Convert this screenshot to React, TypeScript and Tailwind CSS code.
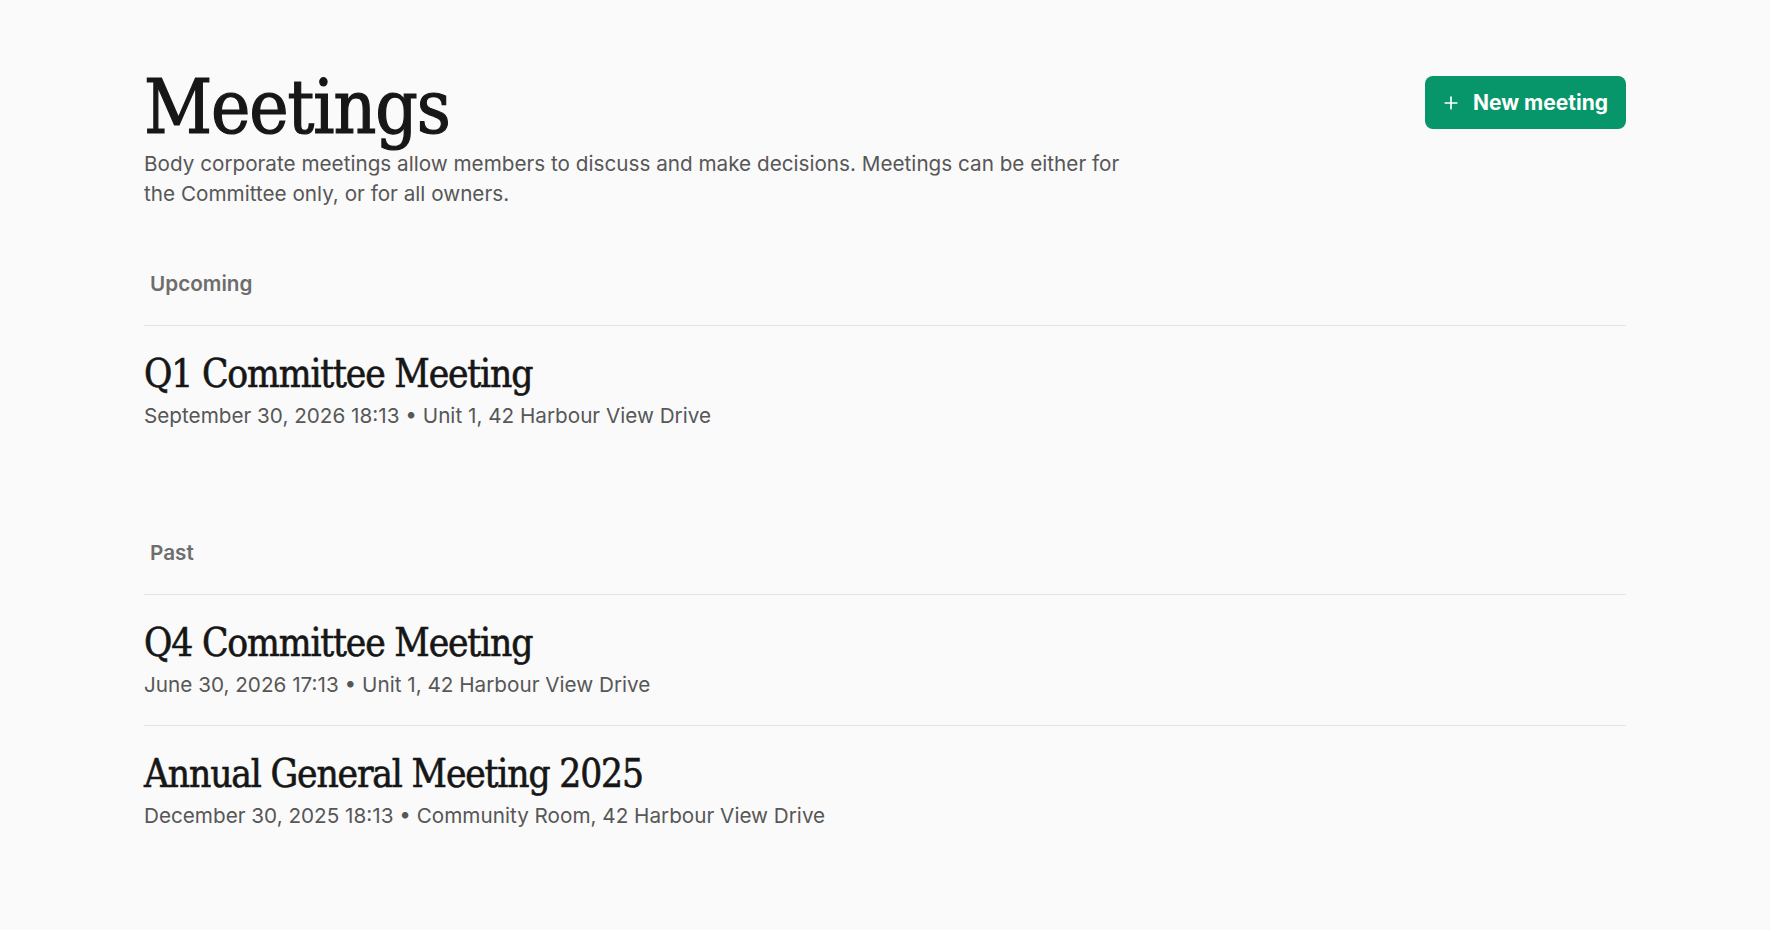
import React from 'react';
import { Plus } from 'lucide-react';

type Meeting = { title: string; when: string; where: string };

const upcoming: Meeting[] = [
  { title: 'Q1 Committee Meeting', when: 'September 30, 2026 18:13', where: 'Unit 1, 42 Harbour View Drive' },
];

const past: Meeting[] = [
  { title: 'Q4 Committee Meeting', when: 'June 30, 2026 17:13', where: 'Unit 1, 42 Harbour View Drive' },
  { title: 'Annual General Meeting 2025', when: 'December 30, 2025 18:13', where: 'Community Room, 42 Harbour View Drive' },
];

const serif = { fontFamily: '"DejaVu Serif Condensed", "DejaVu Serif", serif' };

const MeetingSection: React.FC<{ label: string; items: Meeting[]; className?: string }> = ({ label, items, className }) => (
  <section className={className}>
    <h2 className="px-1.5 pb-[27px] text-[20.7px] leading-[28px] font-semibold text-[#6d6d6d]">{label}</h2>
    <ul>
      {items.map((m) => (
        <li key={m.title} className="border-t border-[#e4e4e4] pt-6 pb-[25px] cursor-pointer">
          <h3
            className="text-[38.5px] leading-[48px] tracking-[-0.03em] font-stretch-condensed text-[#161616] [-webkit-text-stroke:0.6px_#161616]"
            style={serif}
          >
            {m.title}
          </h3>
          <p className="mt-[3px] text-[20.7px] leading-[30px] text-[#575757]">
            {m.when} • {m.where}
          </p>
        </li>
      ))}
    </ul>
  </section>
);

export default function App() {
  return (
    <div className="min-h-screen bg-[#fafafa]" style={{ fontFamily: 'Inter, "Liberation Sans", sans-serif' }}>
      <main className="px-36 pt-[73px] pb-16">
        <header className="flex items-start justify-between">
          <div>
            <h1
              className="-mt-[2px] text-[74px] leading-[72px] tracking-[-0.015em] font-stretch-condensed text-[#171717] [-webkit-text-stroke:1.2px_#171717]"
              style={serif}
            >
              Meetings
            </h1>
            <p className="mt-[6px] max-w-[990px] text-[20.7px] leading-[30px] text-[#575757]">
              Body corporate meetings allow members to discuss and make decisions. Meetings can be either for the
              Committee only, or for all owners.
            </p>
          </div>
          <button className="mt-[3px] flex h-[53px] items-center gap-3 rounded-lg bg-[#079669] pl-4 pr-[18px] text-[21px] font-bold text-white">
            <Plus size={20} strokeWidth={2} />
            New meeting
          </button>
        </header>

        <MeetingSection label="Upcoming" items={upcoming} className="mt-[61px]" />
        <MeetingSection label="Past" items={past} className="mt-[83px]" />
      </main>
    </div>
  );
}
